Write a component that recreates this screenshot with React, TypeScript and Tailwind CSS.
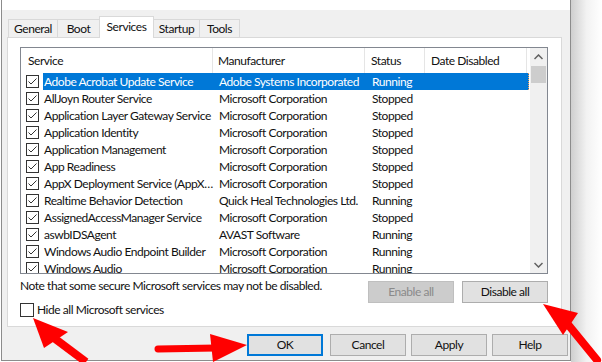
import React from 'react';

const rows: [string, string, string][] = [
  ['Adobe Acrobat Update Service', 'Adobe Systems Incorporated', 'Running'],
  ['AllJoyn Router Service', 'Microsoft Corporation', 'Stopped'],
  ['Application Layer Gateway Service', 'Microsoft Corporation', 'Stopped'],
  ['Application Identity', 'Microsoft Corporation', 'Stopped'],
  ['Application Management', 'Microsoft Corporation', 'Stopped'],
  ['App Readiness', 'Microsoft Corporation', 'Stopped'],
  ['AppX Deployment Service (AppX…', 'Microsoft Corporation', 'Stopped'],
  ['Realtime Behavior Detection', 'Quick Heal Technologies Ltd.', 'Running'],
  ['AssignedAccessManager Service', 'Microsoft Corporation', 'Stopped'],
  ['aswbIDSAgent', 'AVAST Software', 'Running'],
  ['Windows Audio Endpoint Builder', 'Microsoft Corporation', 'Running'],
  ['Windows Audio', 'Microsoft Corporation', 'Running'],
];

function CheckBox({ checked, size = 13 }: { checked: boolean; size?: number }) {
  return (
    <div
      className="border border-[#333] bg-white flex items-center justify-center shrink-0"
      style={{ width: size, height: size }}
    >
      {checked && (
        <svg width="11" height="11" viewBox="0 0 11 11">
          <polyline points="1.5,5.5 4,8 9.5,2.5" fill="none" stroke="#333" strokeWidth="1" />
        </svg>
      )}
    </div>
  );
}

function Tab({ label, className }: { label: string; className: string }) {
  return (
    <div className={`flex items-center justify-center border-[#d9d9d9] ${className}`}>{label}</div>
  );
}

export default function App() {
  return (
    <div className="w-[602px] h-[362px] bg-white relative overflow-hidden text-[12px] tracking-[-0.45px] text-[#111] font-['Lato',sans-serif] leading-[16px]">
      <div className="flex h-full">
        {/* dialog window */}
        <div className="ml-[1px] w-[570px] h-[361px] border-l border-r border-b border-[#8c8c8c] bg-[#f0f0f0] flex flex-col">
          <div className="h-[10px] bg-white" />

          {/* tabs */}
          <div className="h-[27px] flex items-end pl-[6px]">
            <Tab label="General" className="w-[50px] h-[18px] border-t border-l border-r" />
            <Tab label="Boot" className="w-[41px] h-[18px] border-t" />
            <Tab label="Services" className="w-[55px] h-[22px] border-t border-l border-r bg-white relative z-10 -mb-px pb-[2px]" />
            <Tab label="Startup" className="w-[46px] h-[18px] border-t border-r" />
            <Tab label="Tools" className="w-[40px] h-[18px] border-t border-r" />
          </div>

          {/* tab panel */}
          <div className="ml-[5px] w-[555px] h-[290px] bg-white border border-[#d9d9d9] px-[12px] pt-[9px]">
            {/* list view */}
            <div className="w-[528px] h-[227px] border border-[#828790] flex overflow-hidden">
              <div className="w-[508px] flex flex-col">
                <div className="h-[25px] flex shrink-0">
                  <div className="w-[192px] h-full border-r border-[#e5e5e5] flex items-center pl-[7px]">Service</div>
                  <div className="w-[152px] h-full border-r border-[#e5e5e5] flex items-center pl-[5px]">Manufacturer</div>
                  <div className="w-[60px] h-full border-r border-[#e5e5e5] flex items-center pl-[6px]">Status</div>
                  <div className="w-[102px] h-full border-r border-[#e5e5e5] flex items-center pl-[6px]">Date Disabled</div>
                </div>
                {rows.map(([name, maker, status], i) => {
                  const sel = i === 0;
                  return (
                    <div key={name} className="h-[17px] flex shrink-0">
                      <div className="w-[22px] flex items-center justify-center pl-[1px]">
                        <CheckBox checked />
                      </div>
                      <div
                        className={`flex-1 flex items-center ${sel ? 'bg-[#0078d7] text-white border-r border-dotted border-[#f5a35c]' : ''}`}
                      >
                        <div className="w-[170px] pl-[1px] whitespace-nowrap">{name}</div>
                        <div className="w-[152px] pl-[6px] whitespace-nowrap">{maker}</div>
                        <div className="w-[60px] pl-[7px] whitespace-nowrap">{status}</div>
                      </div>
                    </div>
                  );
                })}
              </div>
              {/* scrollbar */}
              <div className="w-[17px] ml-[1px] h-full bg-[#f0f0f0] flex flex-col items-center">
                <div className="h-[17px] w-full flex items-center justify-center">
                  <svg width="9" height="6" viewBox="0 0 9 6">
                    <polyline points="0.5,5 4.5,1 8.5,5" fill="none" stroke="#606060" strokeWidth="1.5" />
                  </svg>
                </div>
                <div className="mt-[1px] w-[15px] h-[17px] bg-[#cdcdcd]" />
                <div className="flex-1" />
                <div className="h-[17px] w-full flex items-center justify-center">
                  <svg width="9" height="6" viewBox="0 0 9 6">
                    <polyline points="0.5,1 4.5,5 8.5,1" fill="none" stroke="#606060" strokeWidth="1.5" />
                  </svg>
                </div>
              </div>
            </div>

            {/* below list */}
            <div className="w-[528px] flex">
              <div className="flex-1 flex flex-col">
                <div className="mt-[4px] h-[16px] flex items-center whitespace-nowrap">Note that some secure Microsoft services may not be disabled.</div>
                <div className="mt-[8px] flex items-center gap-[3px]">
                  <CheckBox checked={false} size={14} />
                  <span>Hide all Microsoft services</span>
                </div>
              </div>
              <div className="mt-[7px] flex gap-[8px]">
                <div className="w-[86px] h-[22px] bg-[#cccccc] border border-[#bfbfbf] text-[#8a8a8a] flex items-center justify-center">Enable all</div>
                <div className="w-[86px] h-[22px] bg-[#e1e1e1] border border-[#adadad] flex items-center justify-center">Disable all</div>
              </div>
            </div>
          </div>

          {/* dialog buttons */}
          <div className="mt-[7px] flex justify-end gap-[5px] pr-[2px]">
            <div className="mr-[2px] w-[76px] h-[22px] bg-[#e1e1e1] border-2 border-[#0078d7] flex items-center justify-center">OK</div>
            <div className="w-[76px] h-[22px] bg-[#e1e1e1] border border-[#adadad] flex items-center justify-center">Cancel</div>
            <div className="w-[76px] h-[22px] bg-[#e1e1e1] border border-[#adadad] flex items-center justify-center">Apply</div>
            <div className="w-[76px] h-[22px] bg-[#e1e1e1] border border-[#adadad] flex items-center justify-center">Help</div>
          </div>
        </div>
        {/* window shadow */}
        <div className="flex-1 h-full bg-gradient-to-r from-[#cfcfcf] via-[#f2f2f2] to-white" />
      </div>

      {/* red annotation arrows */}
      <svg className="absolute inset-0 pointer-events-none" width="602" height="362" viewBox="0 0 602 362">
        <line x1="54" y1="338" x2="86" y2="362" stroke="#ff0000" strokeWidth="8" />
        <polygon points="33,318 68,332 44,348" fill="#ff0000" />
        <line x1="158" y1="349" x2="216" y2="348" stroke="#ff0000" strokeWidth="7" strokeLinecap="round" />
        <polygon points="247,345 210,334 213,362" fill="#ff0000" />
        <line x1="566" y1="322" x2="597" y2="360" stroke="#ff0000" strokeWidth="8" strokeLinecap="round" />
        <polygon points="543,304 578,313 563,335" fill="#ff0000" />
      </svg>
    </div>
  );
}
